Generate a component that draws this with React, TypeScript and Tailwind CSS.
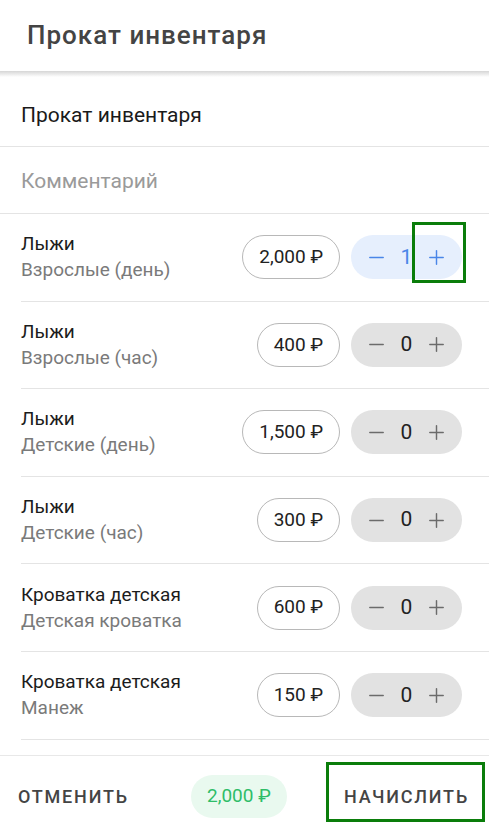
import React from 'react';
import { Minus, Plus } from 'lucide-react';

type Item = {
  title: string;
  subtitle: string;
  price: string;
  qty: number;
};

const items: Item[] = [
  { title: 'Лыжи', subtitle: 'Взрослые (день)', price: '2,000 ₽', qty: 1 },
  { title: 'Лыжи', subtitle: 'Взрослые (час)', price: '400 ₽', qty: 0 },
  { title: 'Лыжи', subtitle: 'Детские (день)', price: '1,500 ₽', qty: 0 },
  { title: 'Лыжи', subtitle: 'Детские (час)', price: '300 ₽', qty: 0 },
  { title: 'Кроватка детская', subtitle: 'Детская кроватка', price: '600 ₽', qty: 0 },
  { title: 'Кроватка детская', subtitle: 'Манеж', price: '150 ₽', qty: 0 },
];

function Stepper({ qty }: { qty: number }) {
  const active = qty > 0;
  return (
    <div
      className={
        active
          ? 'flex h-[44px] w-[111px] items-center justify-between rounded-full bg-[#e6effd] px-[14px] text-[#4a86e8]'
          : 'flex h-[44px] w-[111px] items-center justify-between rounded-full bg-[#e2e2e2] px-[14px] text-[#6b6b6b]'
      }
    >
      <Minus size={23} strokeWidth={1.5} />
      <span className={active ? 'text-[21px] text-[#4a86e8]' : 'text-[21px] text-[#222]'}>{qty}</span>
      <Plus size={23} strokeWidth={1.5} />
    </div>
  );
}

export default function App() {
  return (
    <div className="relative h-[830px] w-[501px] overflow-hidden bg-white font-['Roboto',sans-serif]">
      <div className="flex h-full w-[489px] flex-col">
        {/* Header */}
        <div className="flex h-[71px] shrink-0 items-center pl-[27px]">
          <h1 className="text-[26px] font-medium tracking-[1px] text-[#444]">Прокат инвентаря</h1>
        </div>
        <div className="h-[6px] shrink-0 bg-gradient-to-b from-[#d6d6d6] to-white" />

        {/* Name field */}
        <div className="flex h-[70px] shrink-0 items-center border-b border-[#e4e4e4] pl-[21px] pt-[8px]">
          <span className="text-[21px] text-[#1a1a1a]">Прокат инвентаря</span>
        </div>

        {/* Comment field */}
        <div className="flex h-[67px] shrink-0 items-center border-b border-[#e4e4e4] pl-[21px] pt-[3px]">
          <span className="text-[21px] text-[#9a9a9a]">Комментарий</span>
        </div>

        {/* Items */}
        <div className="flex flex-col pl-[21px]">
          {items.map((item, i) => (
            <div
              key={i}
              className="flex h-[87.6px] items-center border-b border-[#e4e4e4] pr-[27px]"
            >
              <div className="flex flex-1 flex-col gap-[4px]">
                <span className="text-[19px] leading-[22px] text-[#1c1c1c]">{item.title}</span>
                <span className="text-[19px] leading-[22px] text-[#7a7a7a]">{item.subtitle}</span>
              </div>
              <div className="mr-[11px] flex h-[44px] items-center rounded-full border border-[#b8b8b8] px-[16px] text-[19px] text-[#222]">
                {item.price}
              </div>
              <Stepper qty={item.qty} />
            </div>
          ))}
        </div>

        {/* Footer */}
        <div className="mt-[15px] flex h-[82px] shrink-0 items-center border-t border-[#e8e8e8]">
          <span className="ml-[18px] text-[18px] font-medium tracking-[1.8px] text-[#444]">ОТМЕНИТЬ</span>
          <div className="ml-[62px] flex h-[43px] w-[96px] items-center justify-center rounded-full bg-[#e9f9ef] text-[19px] text-[#2ebd68]">
            2,000 ₽
          </div>
          <span className="ml-auto mr-[20px] text-[18px] font-medium tracking-[1.8px] text-[#444]">НАЧИСЛИТЬ</span>
        </div>
      </div>

      {/* Highlight overlays */}
      <div className="absolute left-[412px] top-[222px] h-[61px] w-[54px] border-[3px] border-[#0a7d0a]" />
      <div className="absolute left-[326px] top-[762px] h-[60px] w-[159px] border-[3px] border-[#0a7d0a]" />
    </div>
  );
}
